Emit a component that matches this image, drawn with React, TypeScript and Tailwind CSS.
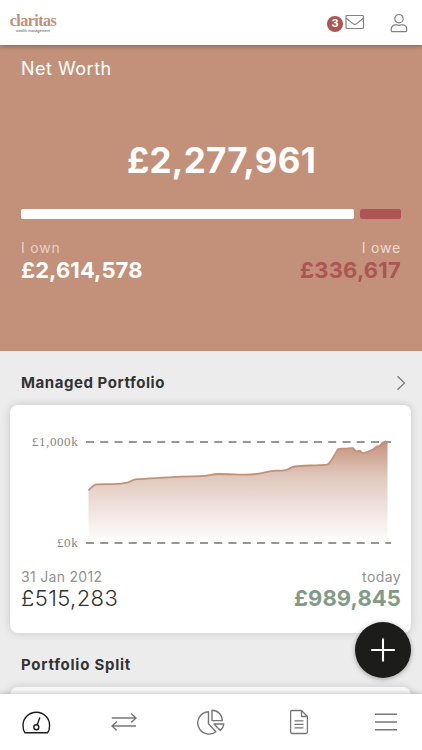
import React from 'react';

export default function App() {
  return (
    <div className="relative flex h-[750px] w-[422px] flex-col overflow-hidden bg-[#ececec] font-['Inter','Liberation_Sans',sans-serif] text-[#333333]">
      <Header />
      <NetWorth />

      {/* Managed Portfolio */}
      <main className="min-h-0 flex-1 overflow-hidden">
        <div className="flex h-[54px] items-center justify-between pt-2.5 pr-[16.5px] pl-[21px]">
          <h2 className="text-[15px] font-bold tracking-[0.55px]">Managed Portfolio</h2>
          <svg className="h-4 w-[10px]" viewBox="0 0 10 16" fill="none" stroke="#777777" strokeWidth="1.2">
            <path d="M1.5 1.2 8.5 8l-7 6.8" />
          </svg>
        </div>

        <section className="mr-[11px] ml-[10px] h-[228px] rounded-lg bg-white shadow-[0_0_9px_rgba(0,0,0,0.16)]">
          <PortfolioChart />
          <div className="flex justify-between pt-[4px] pr-[10px] pl-[11px]">
            <Amount label="31 Jan 2012" value="£515,283" labelClass="text-[#929292] tracking-[0.3px]" valueClass="font-light text-[#333333] tracking-[0.4px]" />
            <Amount label="today" value="£989,845" labelClass="text-[#929292] tracking-[0.4px]" valueClass="font-bold text-[#839b86] tracking-[0.1px]" right />
          </div>
        </section>

        <h2 className="flex h-[54px] items-center pt-[11px] pl-[21px] text-[15px] font-bold tracking-[0.75px]">Portfolio Split</h2>
        <section className="mr-[11px] ml-[10px] h-20 rounded-lg bg-[#f9f9f9] shadow-[0_0_9px_rgba(0,0,0,0.16)]" />
      </main>

      <BottomNav />

      <button className="absolute right-[10.6px] bottom-[72px] z-20 flex h-[56px] w-[56px] items-center justify-center rounded-full bg-[#1c1c1a] shadow-[0_1px_5px_rgba(0,0,0,0.35)]">
        <svg className="h-6 w-6" viewBox="0 0 24 24" stroke="white" strokeWidth="2.1">
          <path d="M12 .5v23M.2 12h23.6" />
        </svg>
      </button>
    </div>
  );
}

function Header() {
  return (
    <header className="relative z-10 flex h-[45px] shrink-0 items-center justify-between bg-white pr-[14px] pl-[10px] shadow-[0_1px_5px_rgba(0,0,0,0.35)]">
      <div className="flex w-[46px] flex-col items-center pt-[2px]">
        <span className="font-['Liberation_Serif',serif] text-[16px] leading-[13px] font-bold tracking-[-0.5px] text-[#c19078]">claritas</span>
        <span className="mt-[2px] text-[3.6px] leading-[4px] whitespace-nowrap text-[#555555]">wealth management</span>
      </div>
      <div className="flex items-center">
        <span className="mt-[2px] flex h-4 w-4 items-center justify-center rounded-full bg-[#ae5455] text-[11px] font-bold text-white">3</span>
        <svg className="mr-[25px] ml-[2px] h-[16px] w-[20px] -mt-px" viewBox="0 0 20 16" fill="none" stroke="#828282" strokeWidth="1.2">
          <rect x="1" y="1.5" width="17.5" height="13" rx="1" />
          <path d="M1.2 4.2 8 9.6q1.8 1.5 3.6 0l6.8-5.4" />
        </svg>
        <svg className="h-[20px] w-[18px]" viewBox="0 0 18 20" fill="none" stroke="#828282" strokeWidth="1.2">
          <circle cx="9" cy="5.7" r="4.2" />
          <path d="M5.5 11.8h1c1.6.7 3.4.7 5 0h1c2.2 0 4.2 1.7 4.2 4.2v1.4c0 .7-.4 1.2-1.1 1.2H2.4c-.7 0-1.1-.5-1.1-1.2V16c0-2.5 2-4.2 4.2-4.2Z" />
        </svg>
      </div>
    </header>
  );
}

function NetWorth() {
  return (
    <section className="h-[306px] shrink-0 bg-[#c3917a] px-[21px] pt-[10px] text-white">
      <h1 className="text-[18px] leading-7 tracking-[0.5px]">Net Worth</h1>
      <div className="mt-[55px] pl-[21px] text-center text-[35px] leading-[44px] font-bold tracking-[0.2px]">£2,277,961</div>
      <div className="mt-[27px] flex h-[10px] gap-[6px]">
        <div className="flex-1 rounded-[2px] bg-white" />
        <div className="w-[41px] rounded-[2px] bg-[#ae5455]" />
      </div>
      <div className="mt-[19px] flex justify-between">
        <Amount label="I own" value="£2,614,578" labelClass="text-[#e9cec2] tracking-[0.8px]" valueClass="mt-px font-bold text-white tracking-[0.1px]" />
        <Amount label="I owe" value="£336,617" labelClass="text-[#f0d9cd] tracking-[0.8px]" valueClass="mt-px font-bold text-[#ae5455] tracking-[0.2px]" right />
      </div>
    </section>
  );
}

function Amount({ label, value, labelClass, valueClass, right }: { label: string, value: string, labelClass: string, valueClass: string, right?: boolean }) {
  return (
    <div className={right ? 'text-right' : ''}>
      <div className={`text-[14px] leading-5 ${labelClass}`}>{label}</div>
      <div className={`text-[22px] leading-[22px] ${valueClass}`}>{value}</div>
    </div>
  );
}

function PortfolioChart() {
  const line = 'M78.5 85.5 C81 83 83 79.5 87 79.3 C98 78.8 107 79.5 116 77.8 C121 77 122 74.5 127 74.2 C143 73.5 168 71.5 190 71.2 C199 71 202 69 208 69 C221 69 231 70 241 69.5 C252 69 258 65.7 266 65.6 C277 65.6 277 65 282 62.2 C288 60 303 61 317 59.7 C321 58 324 50 328 44.2 C330 43.2 332 44 336 43.6 C339 42.8 341 43.2 343 43.2 L346 46.5 L350 45.8 L352.5 48.3 C357 47.5 361 45.5 363 44.5 L366.5 41.5 L369.5 41 L372.5 37.8 L375.5 36.5 L377.5 38';
  return (
    <svg className="block h-[158px] w-full" viewBox="0 0 401 158">
      <defs>
        <linearGradient id="area" x1="0" y1="36" x2="0" y2="138" gradientUnits="userSpaceOnUse">
          <stop offset="0" stopColor="#c3917a" />
          <stop offset="0.35" stopColor="#c3917a" stopOpacity="0.5" />
          <stop offset="1" stopColor="#c3917a" stopOpacity="0" />
        </linearGradient>
      </defs>
      <g fontFamily="'Liberation Serif', serif" fontSize="13" fill="#858585" textAnchor="end" letterSpacing="0.6">
        <text x="68.3" y="40.5">£1,000k</text>
        <text x="68.3" y="142">£0k</text>
      </g>
      <g stroke="#969696" strokeWidth="2" strokeDasharray="8 6.25">
        <path d="M76 37H381" />
        <path d="M76 138H381" />
      </g>
      <path d={`${line} V138 H78.5 Z`} fill="url(#area)" />
      <path d={line} fill="none" stroke="#c3917a" strokeWidth="1.8" />
    </svg>
  );
}

function BottomNav() {
  return (
    <nav className="relative z-10 flex h-14 shrink-0 items-center justify-between bg-white px-[21px] shadow-[0_-1px_5px_rgba(0,0,0,0.2)]">
      {/* Dashboard */}
      <NavItem>
        <svg className="h-[28px] w-[30px]" viewBox="0 0 30 28" fill="none" stroke="#1c1c1a" strokeWidth="1.4" strokeLinejoin="round">
          <path d="M4 24.8C2.5 23 2 20.8 2 17.5 2 9.7 8 4.2 15.3 4.2S28.6 9.7 28.6 17.5c0 3.3-.5 5.5-2 7.3Z" />
          <circle cx="15.3" cy="19.2" r="2.5" />
          <path d="m16.2 16.8 2.7-7.2" />
        </svg>
      </NavItem>
      {/* Transactions */}
      <NavItem>
        <svg className="h-[20px] w-[26px]" viewBox="0 0 26 20" fill="none" stroke="#777777" strokeWidth="1.4">
          <path d="M.8 6h24M20.2 1.5l4.8 4.5-4.8 4.5M25 14H1M5.8 9.5 1 14l4.8 4.5" />
        </svg>
      </NavItem>
      {/* Split */}
      <NavItem>
        <svg className="h-[26px] w-[28px]" viewBox="0 0 28 26" fill="none" stroke="#777777" strokeWidth="1.4" strokeLinejoin="round">
          <path d="M11.5 2.7v12l7.4 8A11.2 11.2 0 1 1 11.5 2.7Z" />
          <path d="M15 1.2v10.4h10.3A10.4 10.4 0 0 0 15 1.2Z" />
          <path d="M17 15h9.8c-.2 2.5-1.6 4.7-3.5 6.4Z" />
        </svg>
      </NavItem>
      {/* Documents */}
      <NavItem>
        <svg className="h-[26px] w-[20px]" viewBox="0 0 20 26" fill="none" stroke="#777777" strokeWidth="1.3" strokeLinejoin="round">
          <path d="M12.5 1.5H3c-.8 0-1.4.6-1.4 1.4v20.2c0 .8.6 1.4 1.4 1.4h14c.8 0 1.4-.6 1.4-1.4V7.5Z" />
          <path d="M12.5 1.5v6h5.9M5.5 11.8h9M5.5 15.3h9M5.5 18.8h9" />
        </svg>
      </NavItem>
      {/* Menu */}
      <NavItem>
        <svg className="h-5 w-[22px]" viewBox="0 0 22 20" stroke="#777777" strokeWidth="1.4">
          <path d="M0 2.2h22M0 10h22M0 17.8h22" />
        </svg>
      </NavItem>
    </nav>
  );
}

function NavItem({ children }: { children: React.ReactNode }) {
  return <button className="flex w-[30px] shrink-0 items-center justify-center">{children}</button>;
}
